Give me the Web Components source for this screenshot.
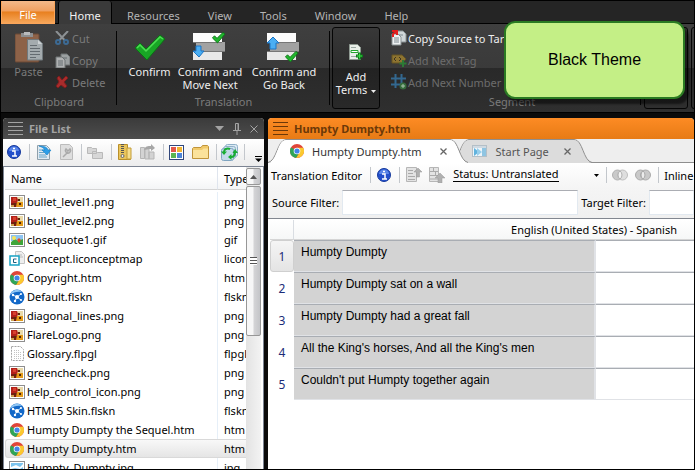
<!DOCTYPE html>
<html lang="en">
<head>
<meta charset="utf-8">
<title>Humpty Dumpty.htm</title>
<style>
html, body { margin: 0; height: 100%; }
body { font: 11px/13px "Noto Sans", "Open Sans", sans-serif; background: #000; overflow: hidden; }
</style>
</head>
<body>
<translation-app></translation-app>
<script>
const define = (name, html) => {
  const t = document.createElement('template');
  t.innerHTML = html;
  customElements.define(name, class extends HTMLElement {
    constructor() {
      super();
      this.attachShadow({ mode: 'open' }).append(t.content.cloneNode(true));
    }
  });
};

const chrome = `<circle cx="8" cy="8" r="7" fill="#e0453a"/><path d="M8 8 1.9 4.6A7 7 0 0 0 7.2 15l3-5.4z" fill="#2fa558"/><path d="M8 4.8h6.2A7 7 0 0 1 7.2 15l3.5-5.8z" fill="#fbc92f"/><path d="M1.9 4.6 5.2 9.8 8 8z" fill="#2fa558"/><circle cx="8" cy="8" r="3.3" fill="#fff"/><circle cx="8" cy="8" r="2.6" fill="#4285e8"/>`;
const checkPath = 'M1 14 6 9l6 6L26 1l5 4L13 26z';
const pages = (o) => `<path d="M6 1h6l3 3v8H6z" fill="#cfd6d8" stroke="#8a9294"/><path d="M1 4h6l3 3v8H1z" fill="#eef1f2" stroke="#8a9294"/><path d="M3 8h5M3 10h5M3 12h5M8 5h4" stroke="#7e8a90"/>` + (o || '');
const slabs = `<rect x="0" y="1" width="29" height="9" fill="#fcfcfc"/><rect x="3" y="10" width="29" height="10" fill="#a2a2a2"/><rect x="0" y="19" width="29" height="9" fill="#e9e9e9"/><path d="M0 10.500h29M0 19.500h32" stroke="#777"/>`;
const icons = {
  paste: [28, 31, `<rect x="0" y="2" width="24" height="28" rx="1" fill="#8d6248"/><rect x="0" y="2" width="24" height="28" rx="1" fill="none" stroke="#6b4935"/><path d="M6 1h12v4H6z" fill="#8d8f91"/><path d="M9 0h6v3H9z" fill="#b9bbbd"/><path d="M12.500 7.500h11l4 4V28h-15z" fill="#a4abae" stroke="#70787c"/><path d="M23 8v4h4" fill="#ccd1d3"/><path d="M15 13.500h7M15 16.500h10M15 19.500h10M15 22.500h10M15 25.500h6" stroke="#646b70"/>`],
  cut: [14, 14, `<path d="M1 0 9.500 9M13 0 4.500 9" stroke="#8c9194" stroke-width="2"/><g fill="none" stroke="#3c6a94" stroke-width="2"><circle cx="3" cy="11" r="2"/><circle cx="11" cy="11" r="2"/></g>`],
  copy: [15, 15, `<g opacity=".65">${pages()}</g>`],
  delete: [14, 14, `<path d="M2 3 4 1l3 4 4-4 2 2-4 4 3 4-2 2-4-3-3 3-2-2 3-4z" fill="#a82c2c" stroke="#7c1d1d"/>`],
  confirm: [32, 26, `<path d="${checkPath}" fill="#18a625" stroke="#0c7216"/><path d="M3 14l3-3 6 6L26 3l3 2" fill="none" stroke="#4cdc52" stroke-width="1.500"/>`],
  next: [34, 30, `${slabs}<path d="M3 14h5v5h3l-5 6-6-6h3z" fill="#4aaef3" stroke="#1d75c4"/><g transform="translate(19 0) scale(.42)"><path d="${checkPath}" fill="#20b52d" stroke="#0a7014" stroke-width="2"/></g>`],
  back: [34, 30, `${slabs}<path d="M3 17v-6H0l6-6 6 6H9v6z" fill="#4aaef3" stroke="#1d75c4"/><g transform="translate(18 19) scale(.42)"><path d="${checkPath}" fill="#20b52d" stroke="#0a7014" stroke-width="2"/></g>`],
  terms: [14, 16, `<path d="M.5.500h8l3 3v12H.5z" fill="#e9efe9" stroke="#8f9a92"/><path d="M2 3.500h5M2 12.500h6" stroke="#9aa8a2"/><path d="M2 6.500h7v2H2z" fill="#fff" stroke="#20a52c"/><path d="M10.500 8.500v7M7 12h7" stroke="#0d7a1a" stroke-width="3"/><path d="M10.500 9.500v5M8 12h5" stroke="#3fdd48"/>`],
  source: [16, 16, pages(`<path d="M2 7V4l3-2M1 1h5v4" fill="none" stroke="#e31d1d" stroke-width="2"/>`)],
  tag: [16, 16, `<path d="M1 3h10l4 4-4 4H1z" fill="#8d7431" stroke="#665423"/><path d="M5 5 3 7l2 2M8 5l2 2-2 2" fill="none" stroke="#3d3420"/><path d="M12 8v7M8.500 11.500h7" stroke="#2c7a35" stroke-width="2"/>`],
  hash: [16, 16, `<path d="M4.500 0v14M10.500 0v14M0 4.500h15M0 10.500h11" stroke="#336890" stroke-width="2"/><circle cx="12" cy="12" r="3.500" fill="#356b3c"/><path d="M12 10v4M10 12h4" stroke="#a9c4ab"/>`],
  grip: [16, 13, `<path d="M0 .5h15M0 4.500h15M0 8.500h15M0 12.500h15" stroke="currentColor"/>`],
  down: [9, 5, `<path d="M0 0h9L4.500 5z" fill="currentColor"/>`],
  caret: [5, 3, `<path d="M0 0h5L2.500 3z" fill="currentColor"/>`],
  pin: [8, 12, `<path d="M2.500 7V.5h3V7M5 1v6M0 7.500h8M4 8v4" fill="none" stroke="currentColor"/>`],
  close: [8, 8, `<path d="m.5.500 7 7m0-7-7 7" stroke="currentColor"/>`],
  x: [7, 7, `<path d="m.5.500 6 6m0-6-6 6" stroke="currentColor" stroke-width="1.300"/>`],
  info: [14, 14, `<circle cx="7" cy="7" r="6.500" fill="#2350cb" stroke="#173a9c"/><path d="M2 6a5 4.500 0 0 1 10 0z" fill="#5a86e8"/><path d="M5 6h3v4.500M5 11h5M6 3.500h2" fill="none" stroke="#fff" stroke-width="1.500"/>`],
  import: [15, 16, `<path d="M.5 1.500h9l3 3v11H.5z" fill="#dfeaf2" stroke="#8fa0ab"/><path d="M2 6h7M2 8.500h5M2 11h7M2 13h8" stroke="#68a5c8"/><path d="M2 2c5 0 8 1 9 4h3l-4 5-5-5h3C7 4 5 3 2 2z" fill="#2b9ee8" stroke="#167cc2" stroke-width=".6"/>`],
  wrench: [13, 16, `<path d="M.5.500h9l3 3v12H.5z" fill="#dedede" stroke="#bcbcbc"/><path d="m3 13 5-5M6 5a2.500 2.500 0 1 0 4 0L8 7z" fill="none" stroke="#aaa" stroke-width="1.500"/>`],
  folders: [16, 14, `<path d="M.5 2.500h4l1 1h4v5h-9zM5.500 6.500h4l1 1h5v6h-10z" fill="#d7d7d7" stroke="#b9b9b9"/>`],
  zip: [14, 16, `<path d="M.5.500h9v12h3v3H.5z" fill="#e9c45b" stroke="#b98f2a"/><path d="M9 4h4v11H9z" fill="#f6dd8c" stroke="#c39c37"/><path d="M4.500 0v10" stroke="#555" stroke-width="3" stroke-dasharray="1 1"/><circle cx="4.500" cy="12" r="1.500" fill="#eee" stroke="#666"/>`],
  send: [16, 16, `<path d="M.5 3.500h4v11h-4zM5 5h4v10H5zM9 8h5v7H9z" fill="#d3d3d3" stroke="#b5b5b5"/><path d="M4 6c1-4 4-4 7-4V0l4 4-4 3V5H8" fill="#a6a6a6"/>`],
  grid: [15, 15, `<rect x=".5" y=".5" width="14" height="14" fill="#fff" stroke="#31477b"/><path d="M2 2h5v5H2z" fill="#e2574a"/><path d="M8 2h5v5H8z" fill="#f2b430"/><path d="M2 8h5v5H2z" fill="#5bb652"/><path d="M8 8h5v5H8z" fill="#4d85d8"/>`],
  folder: [17, 14, `<path d="M.5 3.500 1.500 2.500H9l1.500-2h5l1 1v12H.5z" fill="#f1ca6b" stroke="#c0943a"/><path d="M1 5h9l1.500-1.500H16V13H1z" fill="#fbe29b"/>`],
  sync: [17, 17, `<rect x="4.500" y=".5" width="12" height="12" rx="2" fill="#dbe9f3" stroke="#8fb0c8"/><rect x="2.500" y="2.500" width="12" height="12" rx="2" fill="#cfe1ee" stroke="#8fb0c8"/><rect x=".5" y="4.500" width="12" height="12" rx="2" fill="#c3daea" stroke="#7fa4c0"/><path d="M3 8c0-3 3-4 6-3M14 8c0 4-2 5-4 5" fill="none" stroke="#18ad33" stroke-width="2"/><path d="M0 7.500h6L3 11zM11.500 9h5.500l-3-4zM10.500 10v6l-3.500-3z" fill="#18ad33"/>`],
  overflow: [7, 6, `<path d="M0 .5h7" stroke="#000"/><path d="M0 2.500h7L3.500 6z" fill="#000"/>`],
  png: [16, 14, `<rect x=".5" y=".5" width="15" height="13" fill="#fff" stroke="#8e8e8e"/><path d="M2 2h12v10H2z" fill="#e9d9a8"/><path d="M2 2h6l1 3-1 3H2z" fill="#b3211a"/><path d="M4 3h3v3H4z" fill="#d8412e"/><path d="M2 8h6v4H2z" fill="#7c1a10"/><path d="M2 10h3v2H2z" fill="#c9a24e"/><path d="M8 7h6v5H7z" fill="#e39a18"/><path d="M10 8h2v2h-2z" fill="#4c2308"/><path d="M9 4h2v2H9zM5 8h2v2H5z" fill="#5c2a0a"/>`],
  gif: [16, 14, `<rect x=".5" y=".5" width="15" height="13" fill="#fff" stroke="#8e8e8e"/><path d="M2 2h12v6H2z" fill="#8dc4f2"/><path d="M2 9l4-3 3 2 5-2v6H2z" fill="#3fa53a"/><circle cx="5" cy="5" r="2" fill="#f8e45a"/><path d="M8 7l2-2 2 2-2 3z" fill="#db4f2e"/>`],
  jpg: [16, 14, `<rect x=".5" y=".5" width="15" height="13" fill="#fff" stroke="#8e8e8e"/><path d="M2 2h12v10H2z" fill="#7cc4ee"/><path d="M2 6l5-2 4 2 3-3v3l-3 2-5-1-4 1z" fill="#fff"/><path d="M2 9h12v3H2z" fill="#2f8fb0"/>`],
  concept: [16, 15, `<path d="M6.500.500h6l3 3v9h-9z" fill="#eee" stroke="#c4c4c4"/><path d="M9 4h4M9 6h5" stroke="#bbb"/><rect x="1" y="5" width="9" height="9" fill="#fff" stroke="#18a3c4" stroke-width="1.500"/><path d="M7.500 8H4.500v3.500h3" fill="none" stroke="#1c5f80"/>`],
  chrome: [16, 16, chrome],
  skin: [16, 16, `<circle cx="8" cy="8" r="7.500" fill="#1268c8"/><path d="M1 6a7 7 0 0 1 12-3c-4-1-9 0-12 3z" fill="#8fc6f4"/><path d="m4 6 4 2 4-3M8 8l-2 4M8 8l4 3" stroke="#cfe8ff"/><g fill="#fff"><circle cx="8" cy="8" r="2"/><circle cx="4" cy="6" r="1.200"/><circle cx="12" cy="5" r="1"/><circle cx="6" cy="12" r="1.200"/><circle cx="12" cy="11" r="1"/></g>`],
  doc: [13, 15, `<path d="M.5.500h9l3 3v11H.5z" fill="#fff" stroke="#a5a5a5" stroke-dasharray="2 1"/><path d="M3 4.500h6M3 6.500h7M3 8.500h7M3 10.500h7M3 12.500h7" stroke="#c3c3c3" stroke-dasharray="1 1"/>`],
  start: [16, 14, `<rect x=".5" y="1.500" width="14" height="11" fill="#eef5fa" stroke="#b4bfc7"/><path d="M10 4h4v8h-4z" fill="#8fc5e2"/><path d="M1 2h13v2H1z" fill="#d0dae2"/><path d="m2 4 5 4-5 4z" fill="#61b3de"/><path d="m5 4 5 4-5 4z" fill="#98cfec"/>`],
  up: [16, 16, `<path d="M.5.500h10v14H.5z" fill="#e3e3e3" stroke="#b6b6b6"/><path d="M2 3.500h5M2 6.500h5M2 9.500h7M2 12.500h7" stroke="#aaa"/><path d="M12 1l4 4h-2.500v5h-3V5H8z" fill="#b0b0b0" stroke="#999" stroke-width=".5"/>`],
  up2: [16, 16, `<path d="M.5.500h9v14h-9z" fill="#e3e3e3" stroke="#b6b6b6"/><path d="M1 4.500h8M1 8.500h8M1 12h8M4.500 1v3M6.500 5v3" stroke="#aaa"/><path d="m11 6 5 5h-3v5H9v-5H6z" fill="#b0b0b0" stroke="#999" stroke-width=".5"/>`],
  venn: [16, 12, `<circle cx="5.500" cy="6" r="5" fill="#c9c9c9" stroke="#b0b0b0"/><circle cx="10.500" cy="6" r="5" fill="#dedede" stroke="#bdbdbd"/><path d="M8 2a5 5 0 0 1 0 8 5 5 0 0 1 0-8z" fill="#f4f4f4" stroke="#b0b0b0"/>`],
  venn2: [16, 12, `<circle cx="5.500" cy="6" r="5" fill="#c9c9c9" stroke="#aaa"/><circle cx="10.500" cy="6" r="5" fill="#c9c9c9" stroke="#aaa"/><path d="M8 2a5 5 0 0 1 0 8 5 5 0 0 1 0-8z" fill="#ececec" stroke="#aaa"/>`],
  scrollup: [7, 4, `<path d="M0 4h7L3.500 0z" fill="#555"/>`],
};
customElements.define('ui-icon', class extends HTMLElement {
  constructor() { super(); this.attachShadow({ mode: 'open' }); }
  connectedCallback() {
    const [w, h, body] = icons[this.getAttribute('name')];
    this.shadowRoot.innerHTML = `<style>:host{display:inline-flex;flex:none}svg{display:block}</style><svg width="${w}" height="${h}" viewBox="0 0 ${w} ${h}" fill="none" aria-hidden="true">${body}</svg>`;
  }
});

define('big-command', `<style>
:host { display: block; flex: none; }
button { all: unset; box-sizing: border-box; width: 100%; height: 100%; display: flex; flex-direction: column; align-items: center; text-align: center; color: inherit; white-space: nowrap; }
span { height: 36px; display: flex; align-items: center; }
</style><button><span><slot name="icon"></slot></span><div><slot></slot></div></button>`);

define('small-command', `<style>
:host { display: block; }
button { all: unset; display: flex; align-items: center; height: 22px; white-space: nowrap; }
span { width: 17px; display: flex; flex: none; }
</style><button><span><slot name="icon"></slot></span><slot></slot></button>`);

define('ribbon-group', `<style>
:host { display: flex; flex-direction: column; box-sizing: border-box; padding: 2px 0 3px; flex: none; position: relative; }
.body { display: flex; flex: 1; }
.label { text-align: center; color: #7b7b7b; height: 14px; }
:host::after { content: ""; position: absolute; right: 0; top: 7px; bottom: 7px; width: 1px; background: #050505; }
</style><div class="body"><slot></slot></div><div class="label"><slot name="label"></slot></div>`);

define('app-ribbon', `<style>
:host { display: block; color: #eee; }
nav { display: flex; height: 22px; background: #252525; border-bottom: 1px solid #000; }
nav button { all: unset; box-sizing: border-box; height: 23px; padding: 5px 14px 0; color: #b4b4b4; flex: none; text-align: center; white-space: nowrap; }
nav .file { width: 54px; padding: 5px 0 0; color: #fff; background: linear-gradient(#f3b98a, #f0a060 45%, #e8801f 50%, #f6a65a); border: 1px solid #fba55a; border-top: 0; }
nav .home { width: 54px; margin: 0 1px 0 3px; padding: 5px 0 0; color: #f2f2f2; background: #3a3a3a; border: 1px solid #000; border-width: 0 1px; border-radius: 3px 3px 0 0; }
.panel { display: flex; height: 88px; overflow: hidden; background: linear-gradient(#3f3f3f, #3a3a3a 50%, #292929 50%, #2f2f2f); border-bottom: 1px solid #000; }
.clip { width: 116px; color: #7b7b7b; }
.paste { width: 54px; padding: 3px 0 0 1px; box-sizing: border-box; }
.trans { width: 213px; }
.col { display: flex; flex-direction: column; padding-top: 1px; }
.c1 { width: 65px; } .c2 { width: 56px; } .c3 { width: 92px; }
.trans big-command { padding-top: 3px; }
.terms { width: 48px; margin: 3px 3px 3px 2px; border: 1px solid #050505; border-radius: 3px; box-sizing: border-box; padding-top: 6px; background: linear-gradient(#383838, #2c2c2c 50%, #222 50%, #292929); }
.seg { width: 258px; }
.seg .col { padding-left: 8px; }
.off { color: #6d6d6d; }
.box { width: 44px; margin: 3px 0 3px 3px; border: 1px solid #050505; border-radius: 3px; box-sizing: border-box; flex: none; }
i { display: inline-flex; vertical-align: middle; margin-left: 4px; }
</style>
<nav><button class="file">File</button><button class="home">Home</button><button>Resources</button><button>View</button><button>Tools</button><button>Window</button><button>Help</button></nav>
<div class="panel">
<ribbon-group class="clip"><big-command class="paste"><ui-icon slot="icon" name="paste"></ui-icon>Paste</big-command>
<div class="col"><small-command><ui-icon slot="icon" name="cut"></ui-icon>Cut</small-command><small-command><ui-icon slot="icon" name="copy"></ui-icon>Copy</small-command><small-command><ui-icon slot="icon" name="delete"></ui-icon>Delete</small-command></div>
<span slot="label">Clipboard</span></ribbon-group>
<ribbon-group class="trans"><big-command class="c1"><ui-icon slot="icon" name="confirm"></ui-icon>Confirm</big-command><big-command class="c2"><ui-icon slot="icon" name="next"></ui-icon>Confirm and<br>Move Next</big-command><big-command class="c3"><ui-icon slot="icon" name="back"></ui-icon>Confirm and<br>Go Back</big-command><span slot="label">Translation</span></ribbon-group>
<big-command class="terms"><ui-icon slot="icon" name="terms"></ui-icon>Add<br>Terms<i><ui-icon name="caret"></ui-icon></i></big-command>
<ribbon-group class="seg"><div class="col"><small-command><ui-icon slot="icon" name="source"></ui-icon>Copy Source to Target</small-command><small-command class="off"><ui-icon slot="icon" name="tag"></ui-icon>Add Next Tag</small-command><small-command class="off"><ui-icon slot="icon" name="hash"></ui-icon>Add Next Number</small-command></div><span slot="label">Segment</span></ribbon-group>
<div class="box"></div><div class="box"></div>
</div>`);

define('dock-panel', `<style>
:host { display: flex; flex-direction: column; min-width: 0; border-radius: 4px 4px 0 0; overflow: hidden; background: #f0f0f0; }
header { display: flex; align-items: center; box-sizing: border-box; height: 21px; flex: none; padding: 0 6px 0 5px; gap: 5px; font-weight: 700; color: var(--title-color); background: var(--title-bg); }
h2 { font: inherit; margin: 0; flex: 1; white-space: nowrap; }
.tools { display: flex; align-items: center; gap: 9px; }
</style><header><ui-icon name="grip"></ui-icon><h2><slot name="title"></slot></h2><div class="tools"><slot name="tools"></slot></div></header><slot></slot>`);

define('tool-bar', `<style>
:host { display: flex; align-items: center; box-sizing: border-box; flex: none; white-space: nowrap; }
::slotted(button) { all: unset; display: flex; flex: none; }
::slotted(hr) { width: 1px; height: 16px; border: 0; background: #c3c7cc; margin: 0; flex: none; }
</style><slot></slot>`);

customElements.define('file-list', class extends HTMLElement {
  constructor() {
    super();
    const files = [['png', 'bullet_level1.png', 'png'], ['png', 'bullet_level2.png', 'png'], ['gif', 'closequote1.gif', 'gif'], ['concept', 'Concept.liconceptmap', 'liconceptmap'], ['chrome', 'Copyright.htm', 'htm'], ['skin', 'Default.flskn', 'flskn'], ['png', 'diagonal_lines.png', 'png'], ['png', 'FlareLogo.png', 'png'], ['doc', 'Glossary.flpgl', 'flpgl'], ['png', 'greencheck.png', 'png'], ['png', 'help_control_icon.png', 'png'], ['skin', 'HTML5 Skin.flskn', 'flskn'], ['chrome', 'Humpty Dumpty the Sequel.htm', 'htm'], ['chrome', 'Humpty Dumpty.htm', 'htm'], ['jpg', 'Humpty_Dumpty.jpg', 'jpg']];
    this.attachShadow({ mode: 'open' }).innerHTML = `<style>
:host { display: flex; flex: 1; min-height: 0; background: #fff; border: 1px solid #7c8492; border-width: 1px 1px 0; overflow: hidden; }
.list { flex: 1; min-width: 0; overflow: hidden; padding-left: 1px; }
table { border-collapse: separate; border-spacing: 0; table-layout: fixed; width: 100%; }
th { height: 23px; padding: 0 6px; text-align: left; font-weight: 400; box-sizing: border-box; border-right: 1px solid #dfe5ee; border-bottom: 1px solid #d5d5d5; background: linear-gradient(#fff 40%, #f4f5f6); }
th:last-child { overflow: hidden; }
tbody::before { content: ""; display: block; height: 2px; }
td { height: 19px; padding: 0 0 0 6px; box-sizing: border-box; white-space: nowrap; overflow: hidden; border-right: 1px solid #e6eff8; }
th:last-child, td:last-child { border-right: 0; padding-right: 0; }
td:first-child { padding-left: 4px; }
div.n { display: flex; align-items: center; gap: 2px; }
.n i { width: 16px; display: flex; justify-content: center; }
.sel td { background: linear-gradient(#f8f8f8, #e5e5e5); border-top: 1px solid #d9d9d9; border-bottom: 1px solid #d9d9d9; border-right: 0; }
.sel td:first-child { border-left: 1px solid #d9d9d9; border-radius: 3px 0 0 3px; padding-left: 3px; }
.bar { width: 15px; display: flex; flex-direction: column; background: linear-gradient(90deg, #e3e3e3, #f3f3f3); flex: none; margin-right: 2px; }
.bar > * { box-sizing: border-box; border: 1px solid #979797; border-radius: 2px; background: linear-gradient(90deg, #f7f7f7 45%, #d4d4d6 55%, #c4c5c8); display: flex; align-items: center; justify-content: center; }
.bar button { padding: 0; height: 17px; margin: 1px 0; }
.thumb { height: 150px; }
.thumb::before { content: ""; width: 7px; height: 8px; background: repeating-linear-gradient(#555 0 1px, #fff 1px 3px); }
</style><div class="list"><table><colgroup><col style="width:213px"><col></colgroup><thead><tr><th>Name</th><th>Type</th></tr></thead><tbody>${files.map(([i, n, t], k) => `<tr${k === 13 ? ' class="sel"' : ''}><td><div class="n"><i><ui-icon name="${i}"></ui-icon></i>${n}</div></td><td>${t}</td></tr>`).join('')}</tbody></table></div><div class="bar"><button aria-label="Scroll up"><ui-icon name="scrollup"></ui-icon></button><div class="thumb"></div></div>`;
  }
});

define('document-tab', `<style>
:host { display: flex; flex: none; height: 24px; margin-right: -17px; color: #555; --fill: #dcdcdc; }
:host([active]) { color: #333; --fill: #fff; z-index: 1; }
svg { flex: none; display: block; }
path { fill: var(--fill); stroke: #8e8e8e; }
path.cover { stroke: none; }
.body { display: flex; align-items: center; background: var(--fill); box-shadow: inset 0 1px #8e8e8e; gap: 7px; padding: 0 3px; }
button { all: unset; display: flex; align-items: center; gap: 7px; white-space: nowrap; }
.x { margin-left: 8px; color: #666; }
:host([active]) .x { margin-left: 12px; }
</style><svg width="18" height="24"><path d="M0 23.500C9 22 9 1 18 .500V24H0"/><path class="cover" d="M1 24C10 22 9 1 18 1v23z"/></svg><div class="body"><button role="tab"><slot name="icon"></slot><slot></slot></button><button class="x" aria-label="Close"><ui-icon name="x"></ui-icon></button></div><svg width="18" height="24"><path d="M0 24V.5C9 .500 9 22 18 23.500"/><path class="cover" d="M0 1C8 1 8 22 17 24H0z"/></svg>`);

customElements.define('segment-grid', class extends HTMLElement {
  constructor() {
    super();
    const rows = ['Humpty Dumpty', 'Humpty Dumpty sat on a wall', 'Humpty Dumpty had a great fall', "All the King's horses, And all the King's men", "Couldn't put Humpty together again"];
    this.attachShadow({ mode: 'open' }).innerHTML = `<style>
:host { display: block; flex: 1; min-height: 0; overflow: hidden; background: #fff; border-top: 1px solid #828790; padding: 1px 0 0 2px; }
table { border-collapse: separate; border-spacing: 0; table-layout: fixed; width: 625px; }
th { font-weight: 400; padding: 0; }
thead th { height: 20px; box-sizing: border-box; border-bottom: 1px solid #d5d5d5; border-right: 1px solid #d9dde2; background: linear-gradient(#fff, #f6f7f7); }
tbody th { color: #1b2c78; font-size: 12px; border: 1px solid transparent; }
tbody tr:first-child th { background: linear-gradient(#f5f5f5, #e4e4e4); border-color: #cfcfcf; border-radius: 3px; }
td { height: 32px; box-sizing: border-box; padding: 4px 7px; vertical-align: top; border-top: 1px solid #a9adb3; border-right: 2px solid #e0e2e6; border-bottom: 1px solid #e0e2e6; font: 12px/14px "Liberation Sans", Arial, sans-serif; background: #fff; }
td.s { background: #d3d3d3; white-space: nowrap; }
</style><table><colgroup><col style="width:24px"><col style="width:302px"><col></colgroup><thead><tr><th></th><th colspan="2">English (United States) - Spanish</th></tr></thead><tbody>${rows.map((r, i) => `<tr><th>${i + 1}</th><td class="s">${r}</td><td></td></tr>`).join('')}</tbody></table>`;
  }
});

define('segment-editor', `<style>
:host { display: flex; flex-direction: column; flex: 1; min-height: 0; }
.tabs { display: flex; background: #eee; box-shadow: inset 0 -1px #8e8e8e; height: 24px; flex: none; overflow: hidden; }
tool-bar { height: 24px; padding: 0 0 0 3px; background: linear-gradient(#fff, #f5f5f5); overflow: hidden; }
select { all: unset; border-bottom: 1px solid #000; line-height: 12px; height: 13px; flex: none; }
.filters { display: flex; align-items: center; height: 31px; padding: 0 0 0 4px; gap: 3px; background: linear-gradient(#f5f5f5, #f0f0f0); box-sizing: border-box; overflow: hidden; white-space: nowrap; flex: none; }
input { box-sizing: border-box; height: 25px; border: 1px solid #e2e9f0; border-top-color: #abadb3; padding: 0 4px; margin: 0; background: #fff; font: inherit; min-width: 0; flex: none; }
</style>
<div class="tabs" role="tablist"><document-tab active><ui-icon slot="icon" name="chrome"></ui-icon>Humpty Dumpty.htm</document-tab><document-tab><ui-icon slot="icon" name="start"></ui-icon>Start Page</document-tab></div>
<tool-bar><span>Translation Editor</span><hr style="margin:0 6px 0 8px"><button aria-label="Info"><ui-icon name="info"></ui-icon></button><hr style="margin:0 6px 0 8px"><button aria-label="Previous"><ui-icon name="up"></ui-icon></button><button aria-label="Next" style="margin:0 8px 0 7px"><ui-icon name="up2"></ui-icon></button><select aria-label="Status"><option>Status: Untranslated</option></select><ui-icon name="caret" style="margin:0 7px 0 35px"></ui-icon><hr><button aria-label="Merge" style="margin:0 7px 0 5px"><ui-icon name="venn"></ui-icon></button><button aria-label="Split"><ui-icon name="venn2"></ui-icon></button><hr style="margin:0 5px 0 7px"><span>Inline</span></tool-bar>
<div class="filters"><label for="s">Source Filter:</label><input id="s" style="width:236px"><label for="t">Target Filter:</label><input id="t" style="flex:1"></div>
<segment-grid></segment-grid>`);

define('call-out', `<style>
:host { position: absolute; top: 20px; right: 9px; width: 181px; height: 78px; box-sizing: border-box; display: flex; align-items: center; justify-content: center; background: #c4ef86; border: 2px solid #2a7a22; border-radius: 11px; box-shadow: 4px 5px 2px rgba(0,0,0,.5); color: #000; font: 16px/20px "Liberation Sans", Arial, sans-serif; }
</style><slot></slot>`);

define('translation-app', `<style>
:host { display: flex; flex-direction: column; height: 100vh; box-sizing: border-box; border: 1px solid #000; background: #0b0b0b; position: relative; overflow: hidden; }
main { flex: 1; min-height: 0; display: flex; gap: 4px; padding: 5px 0 0 2px; }
.files { width: 261px; flex: none; --title-bg: linear-gradient(#3b3b3b, #4d4d4d); --title-color: #a3a3a3; }
.doc { flex: 1; --title-bg: linear-gradient(#fd8b24, #e77b15); --title-color: #6b3808; }
.files tool-bar { height: 27px; background: linear-gradient(#fff, #ececec); padding: 0 2px 1px 4px; }
</style>
<app-ribbon></app-ribbon>
<main>
<dock-panel class="files"><span slot="title">File List</span><ui-icon slot="tools" name="down"></ui-icon><ui-icon slot="tools" name="pin"></ui-icon><ui-icon slot="tools" name="close"></ui-icon>
<tool-bar><button aria-label="Info"><ui-icon name="info"></ui-icon></button><hr style="margin:0 7px 0 8px"><button aria-label="Import"><ui-icon name="import"></ui-icon></button><button aria-label="Properties" style="margin:0 8px"><ui-icon name="wrench"></ui-icon></button><hr style="margin-right:5px"><button aria-label="Move"><ui-icon name="folders"></ui-icon></button><hr style="margin:0 6px 0 8px"><button aria-label="Zip"><ui-icon name="zip"></ui-icon></button><button aria-label="Send" style="margin:0 7px 0 8px"><ui-icon name="send"></ui-icon></button><hr style="margin-right:5px"><button aria-label="View"><ui-icon name="grid"></ui-icon></button><button aria-label="Open folder" style="margin:0 7px 0 8px"><ui-icon name="folder"></ui-icon></button><hr style="margin-right:4px"><button aria-label="Refresh"><ui-icon name="sync"></ui-icon></button><hr style="margin-left:6px"><button aria-label="More" style="margin:14px 0 0 auto"><ui-icon name="overflow"></ui-icon></button></tool-bar>
<file-list></file-list></dock-panel>
<dock-panel class="doc"><span slot="title">Humpty Dumpty.htm</span><segment-editor></segment-editor></dock-panel>
</main>
<call-out>Black Theme</call-out>`);
</script>
</body>
</html>
